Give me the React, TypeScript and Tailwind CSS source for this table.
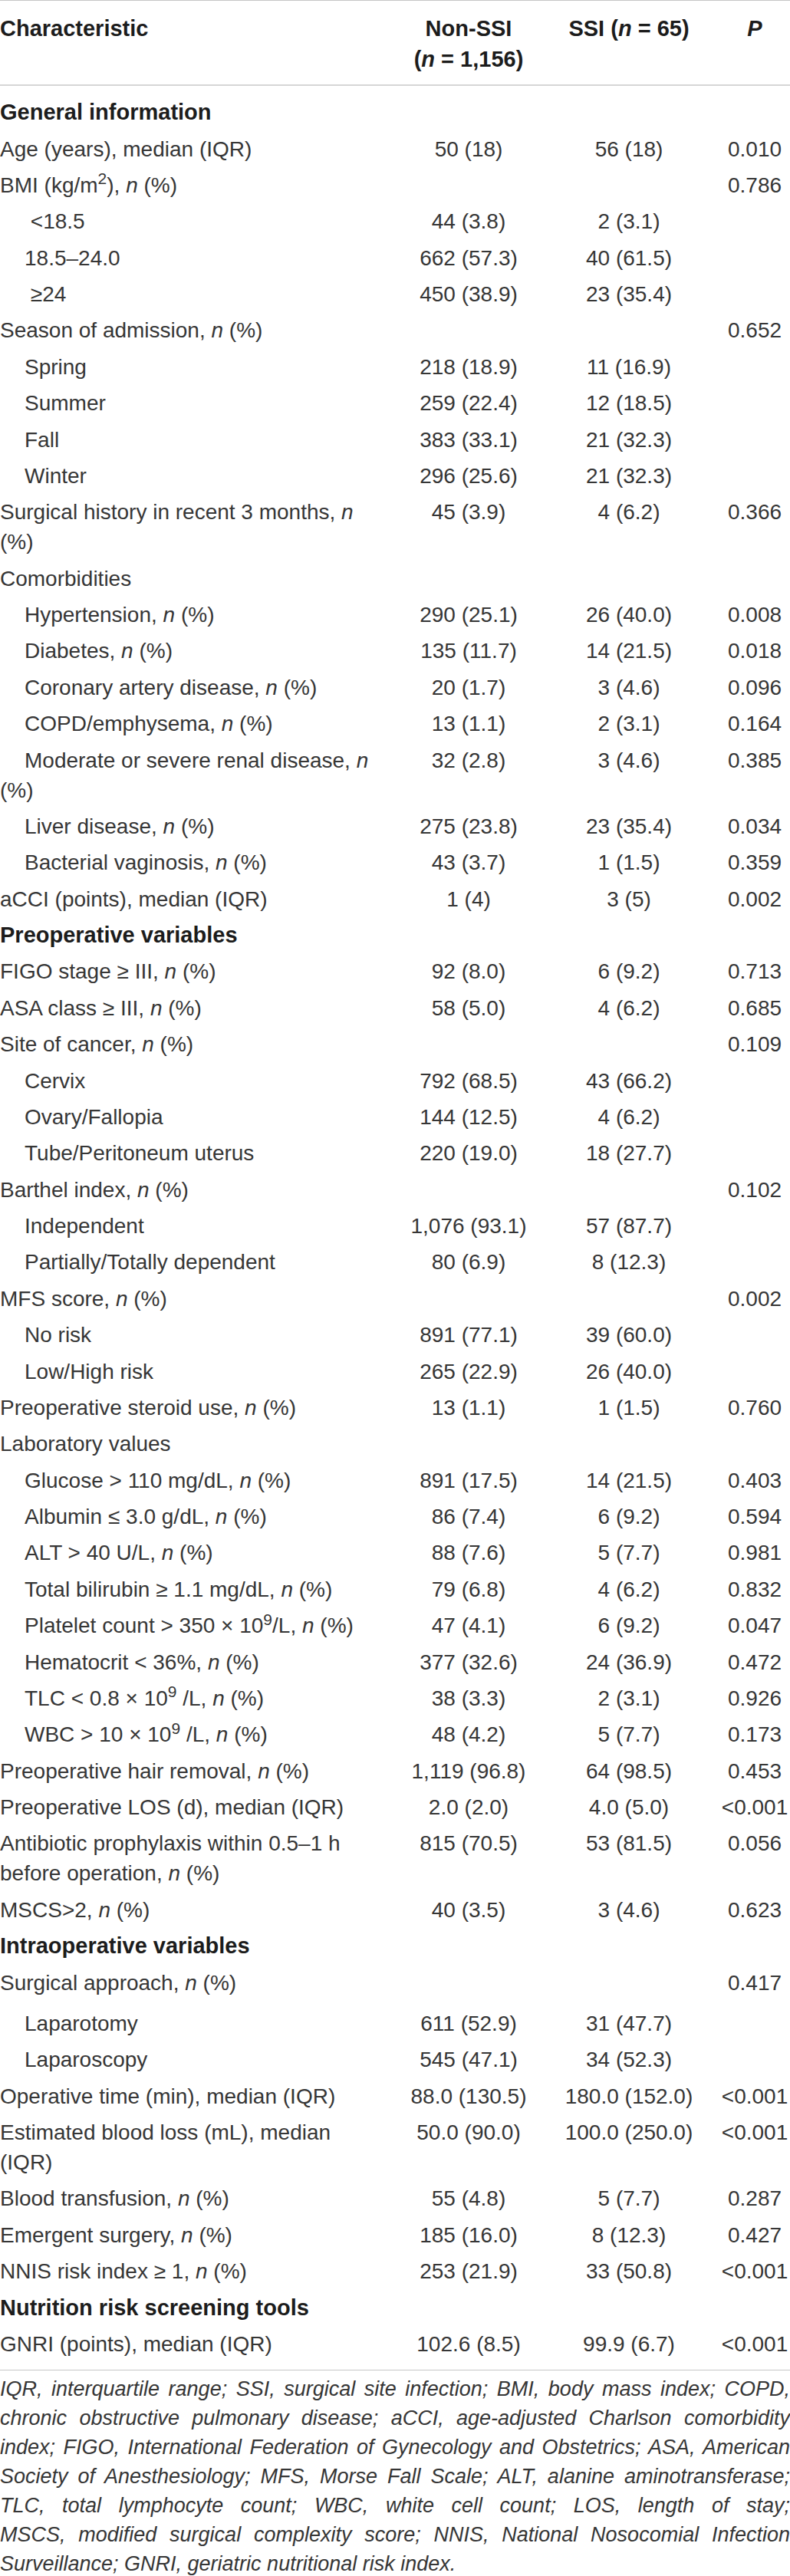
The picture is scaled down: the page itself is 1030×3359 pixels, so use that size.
import type { ReactNode } from 'react';

interface Row {
  label: ReactNode;
  nonSsi?: string;
  ssi?: string;
  p?: string;
  section?: boolean;
  sub?: boolean;
  gap?: boolean;
}

const N = () => <i>n</i>;

const rows: Row[] = [
  { label: 'General information', section: true },
  { label: 'Age (years), median (IQR)', nonSsi: '50 (18)', ssi: '56 (18)', p: '0.010' },
  { label: <>BMI (kg/m<sup>2</sup>), <N /> (%)</>, p: '0.786' },
  { label: '\u00a0<18.5', nonSsi: '44 (3.8)', ssi: '2 (3.1)', sub: true },
  { label: '18.5–24.0', nonSsi: '662 (57.3)', ssi: '40 (61.5)', sub: true },
  { label: '\u00a0≥24', nonSsi: '450 (38.9)', ssi: '23 (35.4)', sub: true },
  { label: <>Season of admission, <N /> (%)</>, p: '0.652' },
  { label: 'Spring', nonSsi: '218 (18.9)', ssi: '11 (16.9)', sub: true },
  { label: 'Summer', nonSsi: '259 (22.4)', ssi: '12 (18.5)', sub: true },
  { label: 'Fall', nonSsi: '383 (33.1)', ssi: '21 (32.3)', sub: true },
  { label: 'Winter', nonSsi: '296 (25.6)', ssi: '21 (32.3)', sub: true },
  { label: <>Surgical history in recent 3 months, <N /><br />(%)</>, nonSsi: '45 (3.9)', ssi: '4 (6.2)', p: '0.366' },
  { label: 'Comorbidities' },
  { label: <>Hypertension, <N /> (%)</>, nonSsi: '290 (25.1)', ssi: '26 (40.0)', p: '0.008', sub: true },
  { label: <>Diabetes, <N /> (%)</>, nonSsi: '135 (11.7)', ssi: '14 (21.5)', p: '0.018', sub: true },
  { label: <>Coronary artery disease, <N /> (%)</>, nonSsi: '20 (1.7)', ssi: '3 (4.6)', p: '0.096', sub: true },
  { label: <>COPD/emphysema, <N /> (%)</>, nonSsi: '13 (1.1)', ssi: '2 (3.1)', p: '0.164', sub: true },
  { label: <>Moderate or severe renal disease, <N /><br />(%)</>, nonSsi: '32 (2.8)', ssi: '3 (4.6)', p: '0.385', sub: true },
  { label: <>Liver disease, <N /> (%)</>, nonSsi: '275 (23.8)', ssi: '23 (35.4)', p: '0.034', sub: true },
  { label: <>Bacterial vaginosis, <N /> (%)</>, nonSsi: '43 (3.7)', ssi: '1 (1.5)', p: '0.359', sub: true },
  { label: 'aCCI (points), median (IQR)', nonSsi: '1 (4)', ssi: '3 (5)', p: '0.002' },
  { label: 'Preoperative variables', section: true },
  { label: <>FIGO stage ≥ III, <N /> (%)</>, nonSsi: '92 (8.0)', ssi: '6 (9.2)', p: '0.713' },
  { label: <>ASA class ≥ III, <N /> (%)</>, nonSsi: '58 (5.0)', ssi: '4 (6.2)', p: '0.685' },
  { label: <>Site of cancer, <N /> (%)</>, p: '0.109' },
  { label: 'Cervix', nonSsi: '792 (68.5)', ssi: '43 (66.2)', sub: true },
  { label: 'Ovary/Fallopia', nonSsi: '144 (12.5)', ssi: '4 (6.2)', sub: true },
  { label: 'Tube/Peritoneum uterus', nonSsi: '220 (19.0)', ssi: '18 (27.7)', sub: true },
  { label: <>Barthel index, <N /> (%)</>, p: '0.102' },
  { label: 'Independent', nonSsi: '1,076 (93.1)', ssi: '57 (87.7)', sub: true },
  { label: 'Partially/Totally dependent', nonSsi: '80 (6.9)', ssi: '8 (12.3)', sub: true },
  { label: <>MFS score, <N /> (%)</>, p: '0.002' },
  { label: 'No risk', nonSsi: '891 (77.1)', ssi: '39 (60.0)', sub: true },
  { label: 'Low/High risk', nonSsi: '265 (22.9)', ssi: '26 (40.0)', sub: true },
  { label: <>Preoperative steroid use, <N /> (%)</>, nonSsi: '13 (1.1)', ssi: '1 (1.5)', p: '0.760' },
  { label: 'Laboratory values' },
  { label: <>Glucose &gt; 110 mg/dL, <N /> (%)</>, nonSsi: '891 (17.5)', ssi: '14 (21.5)', p: '0.403', sub: true },
  { label: <>Albumin ≤ 3.0 g/dL, <N /> (%)</>, nonSsi: '86 (7.4)', ssi: '6 (9.2)', p: '0.594', sub: true },
  { label: <>ALT &gt; 40 U/L, <N /> (%)</>, nonSsi: '88 (7.6)', ssi: '5 (7.7)', p: '0.981', sub: true },
  { label: <>Total bilirubin ≥ 1.1 mg/dL, <N /> (%)</>, nonSsi: '79 (6.8)', ssi: '4 (6.2)', p: '0.832', sub: true },
  { label: <>Platelet count &gt; 350 × 10<sup>9</sup>/L, <N /> (%)</>, nonSsi: '47 (4.1)', ssi: '6 (9.2)', p: '0.047', sub: true },
  { label: <>Hematocrit &lt; 36%, <N /> (%)</>, nonSsi: '377 (32.6)', ssi: '24 (36.9)', p: '0.472', sub: true },
  { label: <>TLC &lt; 0.8 × 10<sup>9</sup> /L, <N /> (%)</>, nonSsi: '38 (3.3)', ssi: '2 (3.1)', p: '0.926', sub: true },
  { label: <>WBC &gt; 10 × 10<sup>9</sup> /L, <N /> (%)</>, nonSsi: '48 (4.2)', ssi: '5 (7.7)', p: '0.173', sub: true },
  { label: <>Preoperative hair removal, <N /> (%)</>, nonSsi: '1,119 (96.8)', ssi: '64 (98.5)', p: '0.453' },
  { label: 'Preoperative LOS (d), median (IQR)', nonSsi: '2.0 (2.0)', ssi: '4.0 (5.0)', p: '<0.001' },
  { label: <>Antibiotic prophylaxis within 0.5–1 h<br />before operation, <N /> (%)</>, nonSsi: '815 (70.5)', ssi: '53 (81.5)', p: '0.056' },
  { label: <>MSCS&gt;2, <N /> (%)</>, nonSsi: '40 (3.5)', ssi: '3 (4.6)', p: '0.623' },
  { label: 'Intraoperative variables', section: true },
  { label: <>Surgical approach, <N /> (%)</>, p: '0.417' },
  { label: 'Laparotomy', nonSsi: '611 (52.9)', ssi: '31 (47.7)', sub: true, gap: true },
  { label: 'Laparoscopy', nonSsi: '545 (47.1)', ssi: '34 (52.3)', sub: true },
  { label: 'Operative time (min), median (IQR)', nonSsi: '88.0 (130.5)', ssi: '180.0 (152.0)', p: '<0.001' },
  { label: <>Estimated blood loss (mL), median<br />(IQR)</>, nonSsi: '50.0 (90.0)', ssi: '100.0 (250.0)', p: '<0.001' },
  { label: <>Blood transfusion, <N /> (%)</>, nonSsi: '55 (4.8)', ssi: '5 (7.7)', p: '0.287' },
  { label: <>Emergent surgery, <N /> (%)</>, nonSsi: '185 (16.0)', ssi: '8 (12.3)', p: '0.427' },
  { label: <>NNIS risk index ≥ 1, <N /> (%)</>, nonSsi: '253 (21.9)', ssi: '33 (50.8)', p: '<0.001' },
  { label: 'Nutrition risk screening tools', section: true },
  { label: 'GNRI (points), median (IQR)', nonSsi: '102.6 (8.5)', ssi: '99.9 (6.7)', p: '<0.001' },
];

const footnote = [
  'IQR, interquartile range; SSI, surgical site infection; BMI, body mass index; COPD,',
  'chronic obstructive pulmonary disease; aCCI, age-adjusted Charlson comorbidity',
  'index; FIGO, International Federation of Gynecology and Obstetrics; ASA, American',
  'Society of Anesthesiology; MFS, Morse Fall Scale; ALT, alanine aminotransferase;',
  'TLC, total lymphocyte count; WBC, white cell count; LOS, length of stay;',
  'MSCS, modified surgical complexity score; NNIS, National Nosocomial Infection',
  'Surveillance; GNRI, geriatric nutritional risk index.',
];

function TableRow({ row }: { row: Row }) {
  return (
    <div className={`grid grid-cols-[520px_182px_236px_92px] py-[4.2px] leading-[39px] ${row.gap ? 'mt-[6px]' : ''}`}>
      <div
        className={`whitespace-nowrap ${row.sub ? 'indent-[32px]' : ''} ${
          row.section ? 'font-bold text-[29px] text-[#1c1c1c]' : ''
        }`}
      >
        {row.label}
      </div>
      <div className="text-center whitespace-nowrap">{row.nonSsi}</div>
      <div className="text-center whitespace-nowrap">{row.ssi}</div>
      <div className="text-center whitespace-nowrap">{row.p}</div>
    </div>
  );
}

export default function App() {
  return (
    <div className="w-[1030px] min-h-[3359px] bg-white font-['Liberation_Sans',Arial,sans-serif] text-[28px] text-[#363636]">
      {/* Header */}
      <div className="border-t border-[#c6c6c6]">
        <div className="grid grid-cols-[520px_182px_236px_92px] pt-[16px] pb-[13px] leading-[40px] font-bold text-[29px] text-[#1c1c1c] border-b-2 border-[#d6d6d6]">
          <div>Characteristic</div>
          <div className="text-center whitespace-nowrap">
            Non-SSI
            <br />
            (<i>n</i> = 1,156)
          </div>
          <div className="text-center whitespace-nowrap">
            SSI (<i>n</i> = 65)
          </div>
          <div className="text-center italic">P</div>
        </div>
      </div>

      {/* Body */}
      <div className="pt-[11px] pb-[10px] border-b border-[#c6c6c6]">
        {rows.map((row, i) => (
          <TableRow key={i} row={row} />
        ))}
      </div>

      {/* Footnote */}
      <div className="pt-[5px] text-[27px] leading-[38px] italic">
        {footnote.map((line, i) => (
          <div
            key={i}
            className={`whitespace-nowrap ${i < footnote.length - 1 ? 'text-justify [text-align-last:justify]' : ''}`}
          >
            {line}
          </div>
        ))}
      </div>
    </div>
  );
}
